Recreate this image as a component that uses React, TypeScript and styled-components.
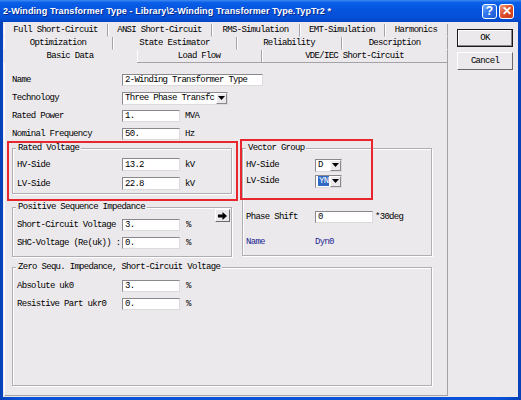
import React from 'react';
import styled, { createGlobalStyle } from 'styled-components';

const MONO = `"Liberation Mono", "DejaVu Sans Mono", monospace`;
const BG = '#ECE9EC';

const GlobalStyle = createGlobalStyle`
  html, body { margin: 0; padding: 0; background: #fff; }
  body { width: 521px; height: 400px; overflow: hidden; }
`;

const Window = styled.div`
  width: 521px;
  height: 400px;
  display: flex;
  flex-direction: column;
  background: linear-gradient(90deg, #0841b8, #0a52d8 4%, #0a52d8 96%, #0841b8);
  font-family: ${MONO};
  font-size: 9px;
  letter-spacing: -0.7px;
  color: #000;
`;

const TitleBar = styled.div`
  height: 22px;
  flex: none;
  display: flex;
  align-items: center;
  padding: 0 7px 0 3px;
  background: linear-gradient(#3d8af2 0%, #0a5ee8 12%, #0654de 45%, #0550d8 80%, #0446c4 100%);
`;

const Title = styled.div`
  flex: 1;
  color: #fff;
  font-family: "Liberation Sans", sans-serif;
  font-weight: bold;
  font-size: 9px;
  letter-spacing: 0.1px;
  text-shadow: 1px 1px 0 #0a2a8a;
  white-space: nowrap;
`;

const CaptionButton = styled.div<{ $close?: boolean }>`
  width: 15px;
  height: 15px;
  margin-left: 2px;
  border: 1px solid #fff;
  border-radius: 3px;
  box-sizing: border-box;
  display: flex;
  align-items: center;
  justify-content: center;
  color: #fff;
  font-family: "Liberation Sans", sans-serif;
  font-weight: bold;
  font-size: 12px;
  letter-spacing: 0;
  background: ${(p) =>
    p.$close
      ? 'linear-gradient(135deg, #f0a080, #e0502c 45%, #c83818)'
      : 'linear-gradient(135deg, #7ab0ff, #2f74ec 45%, #1a58d0)'};
`;

const Body = styled.div`
  flex: 1;
  display: flex;
  margin: 0 3px 3px;
  padding-left: 1px;
  background: ${BG};
`;

const TabArea = styled.div`
  width: 444px;
  display: flex;
  flex-direction: column;
`;

const TabStrip = styled.div`
  padding-top: 2px;
`;

const TabRow = styled.div`
  display: flex;
  height: 13px;
`;

const Tab = styled.div<{ $w: number; $active?: boolean; $base?: boolean }>`
  width: ${(p) => p.$w}px;
  box-sizing: border-box;
  display: flex;
  align-items: center;
  justify-content: center;
  white-space: nowrap;
  border-right: 1px solid ${(p) => (p.$active ? 'transparent' : '#a4a2a6')};
  box-shadow: ${(p) => (p.$active ? 'none' : 'inset 1px 0 0 #fff')};
  border-bottom: 1px solid ${(p) => (p.$base && !p.$active ? '#a4a2a6' : 'transparent')};
`;

const Panel = styled.div`
  flex: 1;
  position: relative;
  margin-bottom: 1px;
  padding: 8px 0 0 7px;
  border-left: 1px solid #fff;
  border-right: 1px solid #a4a2a6;
  border-bottom: 1px solid #a4a2a6;
`;

const Row = styled.div<{ $h: number }>`
  height: ${(p) => p.$h}px;
  display: flex;
  align-items: center;
  white-space: nowrap;
`;

const Label = styled.div<{ $w: number; $blue?: boolean }>`
  width: ${(p) => p.$w}px;
  flex: none;
  color: ${(p) => (p.$blue ? '#1c2690' : '#000')};
`;

const Field = styled.div<{ $w: number; $h?: number }>`
  width: ${(p) => p.$w}px;
  height: ${(p) => p.$h ?? 12}px;
  box-sizing: border-box;
  flex: none;
  display: flex;
  align-items: center;
  padding-left: 2px;
  background: #fff;
  border: 1px solid;
  border-color: #8a888c #dcdadd #dcdadd #8a888c;
  overflow: hidden;
  white-space: nowrap;
`;

const Unit = styled.div<{ $gap?: number }>`
  margin-left: ${(p) => p.$gap ?? 5}px;
`;

const SelectBox = styled.div<{ $w: number }>`
  width: ${(p) => p.$w}px;
  height: 13px;
  box-sizing: border-box;
  display: flex;
  background: #fff;
  border: 1px solid;
  border-color: #8a888c #dcdadd #dcdadd #8a888c;
`;

const SelectText = styled.div`
  flex: 1;
  display: flex;
  align-items: center;
  padding-left: 2px;
  white-space: nowrap;
`;

const Highlight = styled.span`
  background: #316ac5;
  color: #fff;
  padding: 0 1px;
`;

const DropButton = styled.div`
  width: 11px;
  flex: none;
  display: flex;
  align-items: center;
  justify-content: center;
  background: ${BG};
  border: 1px solid;
  border-color: #fff #8a888c #8a888c #fff;
  box-sizing: border-box;
`;

const Columns = styled.div`
  display: flex;
  gap: 10px;
  margin-top: 5px;
`;

const LeftColumn = styled.div`
  width: 220px;
  display: flex;
  flex-direction: column;
  gap: 13px;
`;

const Group = styled.div<{ $w: number; $h: number; $pt: number; $pl?: number }>`
  position: relative;
  width: ${(p) => p.$w}px;
  height: ${(p) => p.$h}px;
  box-sizing: border-box;
  padding: ${(p) => p.$pt}px 0 0 ${(p) => p.$pl ?? 4}px;
  border: 1px solid #b0aeb2;
  box-shadow: inset 1px 1px 0 #fff, 1px 1px 0 #fff;
`;

const Legend = styled.div`
  position: absolute;
  top: -6px;
  left: 3px;
  padding: 0 2px;
  background: ${BG};
  white-space: nowrap;
`;

const ArrowButton = styled.div`
  width: 15px;
  height: 13px;
  margin: 0 1px 0 auto;
  align-self: flex-start;
  margin-top: -7px;
  box-sizing: border-box;
  display: flex;
  align-items: center;
  justify-content: center;
  border: 1px solid;
  border-color: #fff #6a686c #6a686c #fff;
  background: ${BG};
`;

const Spacer = styled.div<{ $h: number }>`
  height: ${(p) => p.$h}px;
`;

const ZeroWrap = styled.div`
  margin-top: 10px;
`;

const Annotation = styled.div`
  position: absolute;
  border: 2px solid #e8262e;
  box-sizing: border-box;
  pointer-events: none;
`;

const ButtonColumn = styled.div`
  display: flex;
  flex-direction: column;
  gap: 5px;
  padding: 7px 0 0 9px;
`;

const DialogButton = styled.div<{ $default?: boolean }>`
  width: 56px;
  height: 18px;
  box-sizing: border-box;
  display: flex;
  align-items: center;
  justify-content: center;
  border: 1px solid;
  border-color: ${(p) => (p.$default ? '#1a1a1a' : '#fff #6a686c #6a686c #fff')};
  box-shadow: ${(p) => (p.$default ? 'inset -1px -1px 0 #8a888c, inset 1px 1px 0 #fff' : 'none')};
`;

const Triangle = () => (
  <svg width="7" height="4" viewBox="0 0 7 4">
    <path d="M0 0h7L3.5 4z" fill="#000" />
  </svg>
);

const Select = ({ w, children }: { w: number; children: React.ReactNode }) => (
  <SelectBox $w={w}>
    <SelectText>{children}</SelectText>
    <DropButton>
      <Triangle />
    </DropButton>
  </SelectBox>
);

const tabRows = [
  [
    { label: 'Full Short-Circuit', w: 104 },
    { label: 'ANSI Short-Circuit', w: 104 },
    { label: 'RMS-Simulation', w: 88 },
    { label: 'EMT-Simulation', w: 85 },
    { label: 'Harmonics', w: 63 },
  ],
  [
    { label: 'Optimization', w: 109 },
    { label: 'State Estimator', w: 124 },
    { label: 'Reliability', w: 105 },
    { label: 'Description', w: 106 },
  ],
  [
    { label: 'Basic Data', w: 133, active: true },
    { label: 'Load Flow', w: 125 },
    { label: 'VDE/IEC Short-Circuit', w: 186 },
  ],
];

const App = () => {
  return (
    <Window>
      <GlobalStyle />
      <TitleBar>
        <Title>2-Winding Transformer Type - Library\2-Winding Transformer Type.TypTr2 *</Title>
        <CaptionButton>?</CaptionButton>
        <CaptionButton $close>✕</CaptionButton>
      </TitleBar>
      <Body>
        <TabArea>
          <TabStrip>
            {tabRows.map((row, i) => (
              <TabRow key={i}>
                {row.map((t: { label: string; w: number; active?: boolean }) => (
                  <Tab key={t.label} $w={t.w} $active={t.active} $base={i === 2}>
                    {t.label}
                  </Tab>
                ))}
              </TabRow>
            ))}
          </TabStrip>
          <Panel>
            <Row $h={18}>
              <Label $w={110}>Name</Label>
              <Field $w={141}>2-Winding Transformer Type</Field>
            </Row>
            <Row $h={18}>
              <Label $w={110}>Technology</Label>
              <Select w={106}>Three Phase Transfc</Select>
            </Row>
            <Row $h={18}>
              <Label $w={110}>Rated Power</Label>
              <Field $w={58}>1.</Field>
              <Unit>MVA</Unit>
            </Row>
            <Row $h={18}>
              <Label $w={110}>Nominal Frequency</Label>
              <Field $w={58}>50.</Field>
              <Unit>Hz</Unit>
            </Row>

            <Columns>
              <LeftColumn>
                <Group $w={220} $h={46} $pt={6}>
                  <Legend>Rated Voltage</Legend>
                  <Row $h={19}>
                    <Label $w={105}>HV-Side</Label>
                    <Field $w={58} $h={13}>13.2</Field>
                    <Unit>kV</Unit>
                  </Row>
                  <Row $h={19}>
                    <Label $w={105}>LV-Side</Label>
                    <Field $w={58} $h={13}>22.8</Field>
                    <Unit>kV</Unit>
                  </Row>
                </Group>
                <Group $w={220} $h={50} $pt={8}>
                  <Legend>Positive Sequence Impedance</Legend>
                  <Row $h={18}>
                    <Label $w={105}>Short-Circuit Voltage</Label>
                    <Field $w={58}>3.</Field>
                    <Unit $gap={6}>%</Unit>
                    <ArrowButton>
                      <svg width="9" height="8" viewBox="0 0 9 8">
                        <path d="M0 2.5h4.5V0L9 4 4.5 8V5.5H0z" fill="#000" />
                      </svg>
                    </ArrowButton>
                  </Row>
                  <Row $h={18}>
                    <Label $w={105}>SHC-Voltage (Re(uk)) :</Label>
                    <Field $w={58}>0.</Field>
                    <Unit $gap={6}>%</Unit>
                  </Row>
                </Group>
              </LeftColumn>

              <Group $w={190} $h={108} $pt={8} $pl={3}>
                <Legend>Vector Group</Legend>
                <Row $h={16}>
                  <Label $w={69}>HV-Side</Label>
                  <Select w={27}>D</Select>
                </Row>
                <Row $h={16}>
                  <Label $w={69}>LV-Side</Label>
                  <Select w={27}>
                    <Highlight>YN</Highlight>
                  </Select>
                </Row>
                <Spacer $h={19} />
                <Row $h={18}>
                  <Label $w={69}>Phase Shift</Label>
                  <Field $w={58}>0</Field>
                  <Unit $gap={2}>*30deg</Unit>
                </Row>
                <Spacer $h={8} />
                <Row $h={16}>
                  <Label $w={69} $blue>Name</Label>
                  <Label $w={60} $blue>Dyn0</Label>
                </Row>
              </Group>
            </Columns>

            <ZeroWrap>
              <Group $w={420} $h={119} $pt={9}>
                <Legend>Zero Sequ. Impedance, Short-Circuit Voltage</Legend>
                <Row $h={18}>
                  <Label $w={105}>Absolute uk0</Label>
                  <Field $w={58}>3.</Field>
                  <Unit $gap={6}>%</Unit>
                </Row>
                <Row $h={18}>
                  <Label $w={105}>Resistive Part ukr0</Label>
                  <Field $w={58}>0.</Field>
                  <Unit $gap={6}>%</Unit>
                </Row>
              </Group>
            </ZeroWrap>

            <Annotation style={{ left: 2, top: 78, width: 231, height: 60 }} />
            <Annotation style={{ left: 235, top: 76, width: 133, height: 61 }} />
          </Panel>
        </TabArea>
        <ButtonColumn>
          <DialogButton $default>OK</DialogButton>
          <DialogButton>Cancel</DialogButton>
        </ButtonColumn>
      </Body>
    </Window>
  );
};

export default App;
